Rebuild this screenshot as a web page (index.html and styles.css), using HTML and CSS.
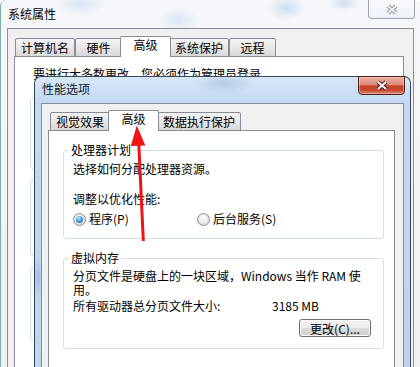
FILE: index.html
```html
<!DOCTYPE html>
<html lang="zh-CN">
<head>
<meta charset="UTF-8">
<meta name="viewport" content="width=device-width, initial-scale=1.0">
<title>系统属性 / 性能选项</title>
<link rel="stylesheet" href="styles.css">
</head>
<body>

<div class="desktop">

    <!-- 系统属性（後ろのウィンドウ） -->
    <div class="window window-back">
        <div class="titlebar">
            <span class="title">系统属性</span>
            <span class="close-btn close-inactive">
                <svg width="14" height="11" viewBox="0 0 14 11">
                    <path d="M3 2 L11 9 M11 2 L3 9" stroke="#8d98a4" stroke-width="4"/>
                    <path d="M3 2 L11 9 M11 2 L3 9" stroke="#f5f7f9" stroke-width="1.8"/>
                </svg>
            </span>
        </div>
        <div class="client">
            <div class="tabs">
                <div class="tab">计算机名</div>
                <div class="tab">硬件</div>
                <div class="tab active">高级</div>
                <div class="tab">系统保护</div>
                <div class="tab">远程</div>
            </div>
            <div class="tab-panel back-panel">
                <p class="notice">要进行大多数更改，您必须作为管理员登录。</p>
                <div class="group-stub stub-perf"></div>
                <div class="group-stub stub-profile"></div>
                <div class="group-stub stub-startup"></div>
            </div>
        </div>
    </div>

    <!-- 性能选项（前面のウィンドウ） -->
    <div class="window window-front">
        <div class="titlebar">
            <span class="title">性能选项</span>
            <span class="close-btn close-active">
                <svg width="14" height="11" viewBox="0 0 14 11">
                    <path d="M3 2 L11 9 M11 2 L3 9" stroke="#4a1c14" stroke-width="4.2"/>
                    <path d="M3 2 L11 9 M11 2 L3 9" stroke="#ffffff" stroke-width="2"/>
                </svg>
            </span>
        </div>
        <div class="client">
            <div class="tabs">
                <div class="tab">视觉效果</div>
                <div class="tab active">高级</div>
                <div class="tab">数据执行保护</div>
            </div>
            <div class="tab-panel front-panel">
                <fieldset class="group">
                    <legend>处理器计划</legend>
                    <div class="group-body">
                        <p class="line line-first">选择如何分配处理器资源。</p>
                        <p class="line line-gap">调整以优化性能:</p>
                        <div class="radio-row">
                            <label class="radio"><span class="radio-dot checked"></span>程序(P)</label>
                            <label class="radio"><span class="radio-dot"></span>后台服务(S)</label>
                        </div>
                    </div>
                </fieldset>
                <fieldset class="group group-vm">
                    <legend>虚拟内存</legend>
                    <div class="group-body">
                        <div class="desc">
                            <span class="desc-line">分页文件是硬盘上的一块区域，Windows 当作 RAM 使</span>
                            <span class="desc-line">用。</span>
                        </div>
                        <div class="size-row">
                            <span class="size-label">所有驱动器总分页文件大小:</span>
                            <span>3185 MB</span>
                        </div>
                        <div class="button-row">
                            <button class="btn">更改(C)...</button>
                        </div>
                    </div>
                </fieldset>
            </div>
        </div>
    </div>

    <!-- 赤い矢印 -->
    <svg class="arrow" width="420" height="367" viewBox="0 0 420 367">
        <line x1="143.3" y1="241" x2="138.7" y2="142" stroke="#ee1414" stroke-width="3"/>
        <polygon points="136.8,125.5 130.8,146 145.3,145.4" fill="#ee1414"/>
    </svg>

</div>

</body>
</html>
```

FILE: styles.css
```css
body {
    margin: 0;
    font-family: "Noto Sans CJK SC", "Noto Sans", sans-serif;
    font-size: 12px;
    color: #000;
    background-color: #ffffff;
}

p {
    margin: 0;
}

.desktop {
    position: relative;
    width: 420px;
    height: 367px;
    overflow: hidden;
    background-color: #ffffff;
}

/* ウィンドウ共通 */
.window {
    position: absolute;
    box-sizing: border-box;
    display: flex;
    flex-direction: column;
}

.titlebar {
    position: relative;
    flex: none;
}

.title {
    display: block;
    padding-left: 1px;
    white-space: nowrap;
}

.client {
    flex: 1;
    border: 1px solid #858d97;
    border-bottom: none;
    background-color: #f0f0f0;
}

/* 閉じるボタン */
.close-btn {
    position: absolute;
    right: -1px;
    display: flex;
    align-items: center;
    justify-content: center;
    box-sizing: border-box;
    border-radius: 0 0 4px 4px;
}

.close-inactive {
    top: -3px;
    width: 47px;
    height: 22px;
    padding-top: 3px;
    border: 1px solid #9aa6b3;
    border-top: none;
    background: linear-gradient(rgba(255, 255, 255, 0.6), rgba(235, 240, 245, 0.7));
}

.close-active {
    top: -1px;
    width: 47px;
    height: 19px;
    border: 1px solid #4e2018;
    background: linear-gradient(#eab0a2 0%, #de8c7a 45%, #c6432b 52%, #c3452d 75%, #df8a6d 100%);
    box-shadow: inset 0 0 0 1px rgba(255, 210, 200, 0.45);
}

/* 系统属性 */
.window-back {
    left: 0;
    top: 0;
    width: 421px;
    height: 400px;
    padding: 0 7px 0 6px;
    border-left: 1px solid #7fb0a8;
    border-radius: 6px 6px 0 0;
    background:
        radial-gradient(ellipse 26px 12px at 80px 4px, rgba(170, 200, 230, 0.35), transparent),
        radial-gradient(ellipse 22px 12px at 178px 20px, rgba(170, 200, 230, 0.35), transparent),
        radial-gradient(ellipse 20px 12px at 285px 8px, rgba(160, 195, 230, 0.45), transparent),
        radial-gradient(ellipse 16px 8px at 343px 3px, rgba(160, 195, 230, 0.45), transparent),
        linear-gradient(#f5f7fa, #eef0f2);
}

.window-back .titlebar {
    height: 28px;
}

.window-back .title {
    line-height: 28px;
}

.window-back .client {
    padding: 7px 9px 0 6px;
}

.window-back .tabs {
    padding-left: 1px;
}

/* 性能选项 */
.window-front {
    left: 34px;
    top: 76px;
    width: 377px;
    height: 300px;
    padding: 0 6px;
    border: 1px solid #38465a;
    border-bottom: none;
    border-radius: 7px 7px 0 0;
    background:
        radial-gradient(ellipse 30px 10px at 190px 6px, rgba(130, 160, 195, 0.35), transparent),
        radial-gradient(ellipse 4px 20px at 3px 200px, rgba(120, 160, 205, 0.45), transparent),
        linear-gradient(#d6e7f8 0, #c3d9f0 26px, #bcd4ee 100%);
}

.window-front .titlebar {
    height: 26px;
}

.window-front .title {
    line-height: 23px;
    color: #101828;
}

.window-front .client {
    padding: 6px 8px 0 6px;
}

.window-front .tabs {
    padding-left: 2px;
}

/* タブ */
.tabs {
    position: relative;
    z-index: 1;
    display: flex;
    align-items: flex-end;
    height: 21px;
    margin-bottom: -1px;
}

.tab {
    box-sizing: border-box;
    min-width: 47px;
    height: 19px;
    padding: 0 5px;
    border: 1px solid #898c95;
    border-radius: 2px 2px 0 0;
    background: linear-gradient(#f4f4f4, #e8e8e8 50%, #d8d8d8);
    line-height: 17px;
    text-align: center;
    white-space: nowrap;
}

.tab.active {
    position: relative;
    z-index: 2;
    min-width: 51px;
    height: 21px;
    margin: 0 -2px;
    padding: 0 7px 4px;
    border-bottom: none;
    background: #ffffff;
    line-height: 16px;
}

.tab-panel {
    box-sizing: border-box;
    height: 320px;
    border: 1px solid #898c95;
    background-color: #ffffff;
}

/* 後ろのパネルの中身 */
.back-panel {
    padding-top: 10px;
}

.notice {
    padding-left: 18px;
    line-height: 14px;
    white-space: nowrap;
}

.group-stub {
    width: 380px;
    margin-left: 15px;
    border: 1px solid #d5dfe5;
    border-radius: 3px;
    box-sizing: border-box;
}

.stub-perf {
    height: 71px;
    margin-top: 17px;
}

.stub-profile {
    height: 76px;
    margin-top: 11px;
}

.stub-startup {
    height: 73px;
    margin-top: 12px;
}

/* 前のパネルの中身 */
.front-panel {
    padding: 12px 10px 0 14px;
}

.group {
    margin: 0;
    padding: 0 12px 12px 5px;
    border: 1px solid #d5dfe5;
    border-radius: 3px;
    min-inline-size: 0;
}

.group legend {
    padding: 0 2px;
    line-height: 14px;
}

.group-body {
    padding-left: 4px;
}

.line {
    line-height: 14px;
}

.line-first {
    margin-top: 5px;
}

.line-gap {
    margin-top: 16px;
}

.radio-row {
    display: flex;
    margin-top: 6px;
    line-height: 14px;
}

.radio {
    display: flex;
    align-items: center;
    white-space: nowrap;
}

.radio:first-child {
    width: 124px;
}

.radio-dot {
    position: relative;
    box-sizing: border-box;
    width: 13px;
    height: 13px;
    margin-right: 3px;
    border: 1px solid #8e9296;
    border-radius: 50%;
    background: radial-gradient(circle at 50% 40%, #ffffff 0%, #e6e6e6 55%, #c9c9c9 100%);
}

.radio-dot.checked::after {
    content: "";
    position: absolute;
    left: 2px;
    top: 2px;
    width: 7px;
    height: 7px;
    border-radius: 50%;
    background: radial-gradient(circle at 40% 30%, #c9ecff 0%, #4aa2e0 45%, #1d568f 100%);
}

.group-vm {
    margin-top: 12px;
    padding-bottom: 11px;
}

.desc {
    margin-top: 4px;
}

.desc-line {
    display: block;
    line-height: 14px;
    white-space: nowrap;
}

.size-row {
    display: flex;
    margin-top: 2px;
    line-height: 14px;
    white-space: nowrap;
}

.size-label {
    width: 199px;
}

.button-row {
    display: flex;
    justify-content: flex-end;
    margin-top: 6px;
}

.btn {
    box-sizing: border-box;
    width: 72px;
    height: 18px;
    padding: 0;
    border: 1px solid #707070;
    border-radius: 3px;
    background: linear-gradient(#f2f2f2 0%, #ebebeb 50%, #dddddd 50%, #cfcfcf 100%);
    box-shadow: inset 0 0 0 1px #fcfcfc;
    font: inherit;
    line-height: 15px;
    color: #000;
}

/* 矢印 */
.arrow {
    position: absolute;
    left: 0;
    top: 0;
    z-index: 10;
    pointer-events: none;
}
```
